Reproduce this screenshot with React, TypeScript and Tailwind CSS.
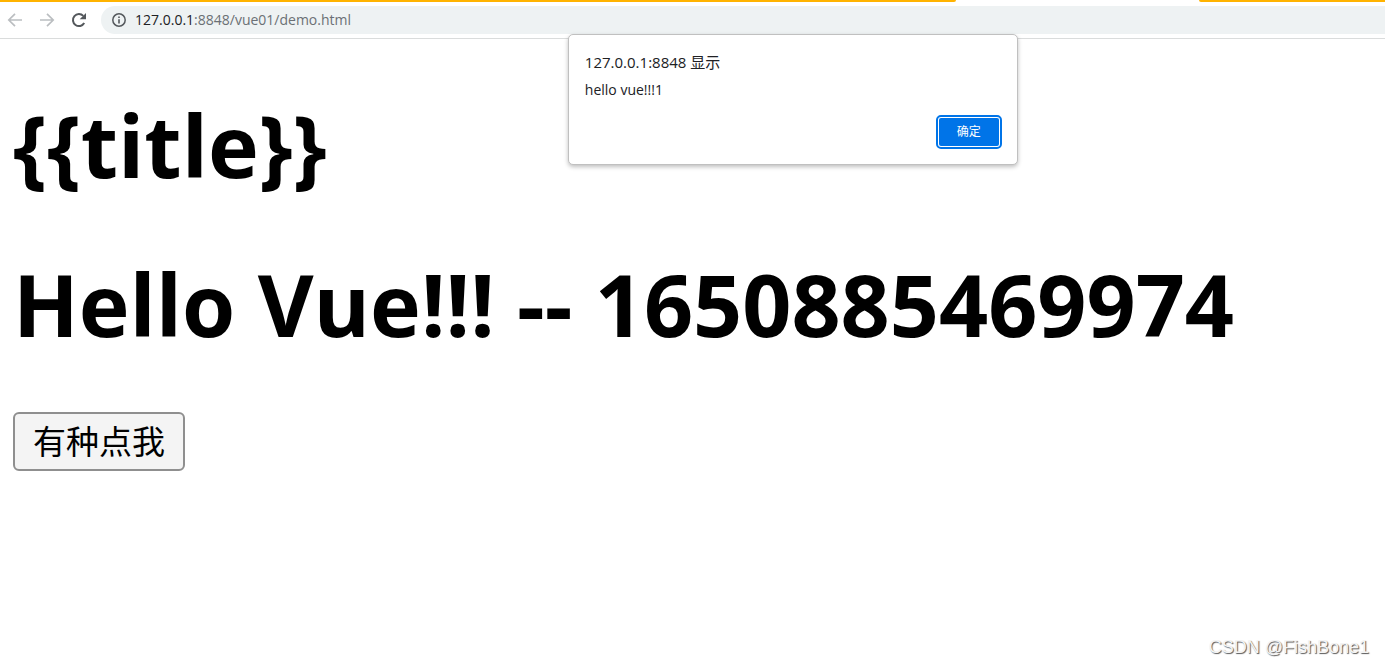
import React from "react";

function ArrowIcon({ forward = false }: { forward?: boolean }) {
  return (
    <svg
      viewBox="0 0 16 16"
      className={forward ? "size-4 rotate-180" : "size-4"}
      fill="none"
      stroke="#bbbec1"
      strokeWidth="1.7"
      aria-hidden="true"
    >
      <path d="M15 8H2.2M8 1.8 1.8 8 8 14.2" />
    </svg>
  );
}

function ReloadIcon() {
  return (
    <svg viewBox="0 0 16 16" className="size-4" aria-hidden="true">
      <path d="M13.2 11A6 6 0 1 1 12.3 3.9" fill="none" stroke="#54585c" strokeWidth="2" />
      <path d="M15 1v6.3H8.7z" fill="#54585c" />
    </svg>
  );
}

function InfoIcon() {
  return (
    <svg viewBox="0 0 14 14" className="size-[14px] shrink-0" aria-hidden="true">
      <circle cx="7" cy="7" r="6.2" fill="none" stroke="#54585c" strokeWidth="1.5" />
      <path d="M6.2 6.2h1.6v4.3H6.2zM6.2 3.5h1.6v1.6H6.2z" fill="#54585c" />
    </svg>
  );
}

function Toolbar() {
  return (
    <header className="border-b border-[#dadcdc]">
      <div className="flex h-[2px] justify-between">
        <div className="w-[69%] rounded-br-[2px] bg-[#ffb300]" />
        <div className="w-[13.4%] rounded-bl-[2px] bg-[#ffb300]" />
      </div>
      <div className="flex items-center py-1 pl-[7px]">
        <nav className="flex gap-4">
          <button type="button" aria-label="后退"><ArrowIcon /></button>
          <button type="button" aria-label="前进"><ArrowIcon forward /></button>
          <button type="button" aria-label="重新加载"><ReloadIcon /></button>
        </nav>
        <button
          type="button"
          className="ml-[14px] flex h-7 grow items-center gap-[9px] rounded-l-full bg-[#eef2f3] pl-[11px] text-left text-[14px] leading-5 text-[#6b7075]"
        >
          <InfoIcon />
          <span>
            <span className="text-[#202124]">127.0.0.1</span>:8848/vue01/demo.html
          </span>
        </button>
      </div>
    </header>
  );
}

function AlertDialog() {
  return (
    <div
      role="alertdialog"
      aria-labelledby="alert-title"
      aria-describedby="alert-message"
      className="absolute top-[34px] left-[41%] w-[450px] rounded-[5px] border border-[#c0c0c0] bg-white pt-[15px] pr-[15px] pb-[15px] pl-4 text-[#202124] shadow-[0_2px_4px_rgba(0,0,0,0.25)]"
    >
      <h2 id="alert-title" className="text-[15px] leading-6">127.0.0.1:8848 显示</h2>
      <p id="alert-message" className="mt-1 text-[14px] leading-6">hello vue!!!1</p>
      <div className="mt-[13px] flex justify-end">
        <button
          type="button"
          className="h-[34px] w-[66px] rounded-[5px] border-2 border-[#0074e8] bg-white p-px text-[12px] text-white"
        >
          <span className="flex h-full items-center justify-center rounded-[2px] bg-[#0074e8]">确定</span>
        </button>
      </div>
    </div>
  );
}

export default function App() {
  return (
    <div className="relative min-h-screen bg-white font-['Open_Sans','Noto_Sans_CJK_SC',sans-serif]">
      <Toolbar />
      <main className="px-[13px] pt-[50px]">
        <div className="flex flex-col gap-[47px] text-[86px] leading-[112px] font-bold text-black">
          <h1>{"{{title}}"}</h1>
          <h1>Hello Vue!!! -- 1650885469974</h1>
        </div>
        <button
          type="button"
          className="mt-[52px] h-[59px] rounded-[6px] border-2 border-[#8f8f8f] bg-[#f4f4f4] px-[18px] text-[33px] leading-none text-black"
        >
          有种点我
        </button>
      </main>
      <AlertDialog />
      <p className="absolute right-4 bottom-1 font-['Liberation_Sans',sans-serif] text-[18px] leading-6 text-[#f4f4f4] [text-shadow:1px_1px_1px_#555555]">
        CSDN @FishBone1
      </p>
    </div>
  );
}
